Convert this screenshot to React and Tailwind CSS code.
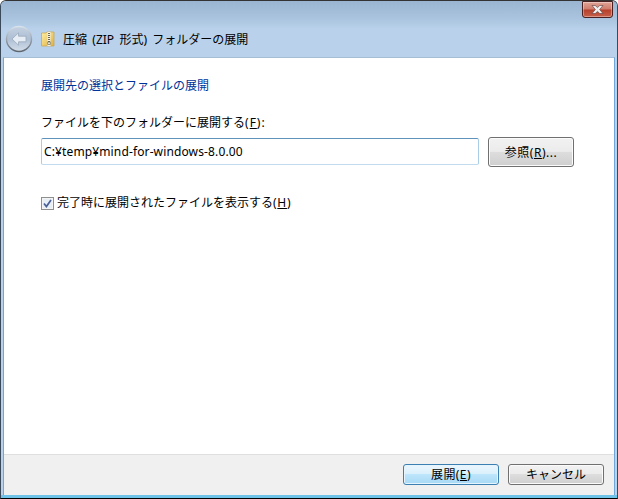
const FONT = "font-['Noto_Sans','Noto_Sans_CJK_JP',sans-serif]";

function BackIcon() {
  return (
    <svg width="28" height="28" viewBox="0 0 28 28" className="block">
      <defs>
        <linearGradient id="ring" x1="0" y1="0" x2="0" y2="1">
          <stop offset="0" stopColor="#d9e2ec" />
          <stop offset="1" stopColor="#5e6670" />
        </linearGradient>
        <linearGradient id="face" x1="0" y1="0" x2="0" y2="1">
          <stop offset="0" stopColor="#c4d2e2" />
          <stop offset="0.5" stopColor="#aebfd4" />
          <stop offset="1" stopColor="#d3deea" />
        </linearGradient>
      </defs>
      <circle cx="14" cy="14" r="12.5" fill="url(#face)" stroke="url(#ring)" strokeWidth="1.4" />
      <path d="M7 14 L13.5 7.8 V11.2 H21 V16.8 H13.5 V20.2 Z" fill="#e6edf5" stroke="#9aa9bb" strokeWidth="0.8" strokeLinejoin="round" />
    </svg>
  );
}

function ZipIcon() {
  return (
    <svg width="14" height="16" viewBox="0 0 14 16" className="block">
      <defs>
        <linearGradient id="fold" x1="0" y1="0" x2="1" y2="1">
          <stop offset="0" stopColor="#fdeea6" />
          <stop offset="1" stopColor="#e0b040" />
        </linearGradient>
      </defs>
      <path d="M0.5 2 H5 L6 1 H13 V15 H0.5 Z" fill="url(#fold)" stroke="#c9a14a" strokeWidth="0.7" />
      <rect x="6.5" y="1" width="3" height="14" fill="#f6f3e6" />
      <path d="M7 2.5h2M7 4.5h2M7 6.5h2M7 8.5h2M7 10.5h2" stroke="#6a6a5a" strokeWidth="1" />
      <rect x="6.8" y="11" width="2.4" height="2.6" fill="none" stroke="#6a6a5a" strokeWidth="0.7" />
    </svg>
  );
}

function CloseGlyph() {
  return (
    <svg width="13" height="9" viewBox="0 0 13 9" className="block">
      <path d="M1 0.5 H4.2 L6.5 2.6 L8.8 0.5 H12 L8.6 4.5 L12 8.5 H8.8 L6.5 6.4 L4.2 8.5 H1 L4.4 4.5 Z" fill="#f2f2f2" stroke="#5a3a3a" strokeWidth="0.6" />
    </svg>
  );
}

function Btn({ children, className = "" }) {
  return (
    <button className={"flex items-center justify-center rounded-[3px] border border-[#707070] bg-[linear-gradient(#f2f2f2_0%,#ebebeb_48%,#dddddd_50%,#cfcfcf_100%)] pt-[1px] text-[12px] text-black shadow-[inset_0_0_0_1px_#fbfbfb] " + className}>
      {children}
    </button>
  );
}

export default function App() {
  return (
    <div className={FONT + " flex h-[499px] w-[618px] flex-col overflow-hidden rounded-t-[6px] border-x border-b border-t border-x-[#3b4a5a] border-t-[#333] border-b-black bg-[#b9d1ea] text-[12px] leading-[16px] text-black"}>
      <div className="flex h-[56px] shrink-0 flex-col bg-[linear-gradient(#9ab5d1_0%,#a9c3de_30%,#b9d1ea_50%,#b9d1ea_100%)] pl-[4px] pr-[4px]">
        <div className="flex h-[25px] justify-end">
          <div className="flex h-[17px] w-[31px] items-center justify-center rounded-b-[3px] border border-[#4a2020] bg-[linear-gradient(#dfa396_0%,#cf7b6c_48%,#b5402b_52%,#c8604a_100%)] shadow-[inset_0_0_0_1px_rgba(255,255,255,0.35)]">
            <CloseGlyph />
          </div>
        </div>
        <div className="flex h-[26px] items-center">
          <BackIcon />
          <div className="ml-[8px]"><ZipIcon /></div>
          <span className="ml-[8px] mt-[1px] text-[12px] text-black [word-spacing:2.2px]">圧縮 (ZIP 形式) フォルダーの展開</span>
        </div>
      </div>

      <div className="mx-[2px] flex min-h-0 flex-1 flex-col border-x border-x-[#6fa8d8] border-t border-t-[#a6bdd6] bg-white">
        <div className="flex flex-1 flex-col pl-[37px] pr-[40px] pt-[20px]">
          <div className="text-[12px] text-[#003399]">展開先の選択とファイルの展開</div>
          <div className="mt-[21px]">ファイルを下のフォルダーに展開する<span className="tracking-[1px]">(<span className="underline">F</span>):</span></div>
          <div className="mt-[6px] flex items-start gap-[9px]">
            <div className="mt-[1px] flex h-[27px] w-[438px] items-center rounded-[2px] border border-[#7fa9cb] border-b-[#c3dbee] border-x-[#a9cde6] border-t-[#5f93bc] pl-[2px] pt-[1px] text-[12px] tracking-[0.13px]">
              C:¥temp¥mind-for-windows-8.0.00
            </div>
            <Btn className="h-[30px] w-[86px]"><span className="tracking-[0.5px]">参照(<span className="underline">R</span>)...</span></Btn>
          </div>
          <div className="mt-[28px] flex items-center gap-[3px]">
            <div className="mt-[1px] flex h-[13px] w-[13px] items-center justify-center border border-[#8e8f8f] bg-[#e6eef6] shadow-[inset_0_0_0_1px_#f4f4f4]">
              <svg width="9" height="9" viewBox="0 0 9 9" className="block"><path d="M1 4.5 L3.4 7.5 L8 1" fill="none" stroke="#4a5f97" strokeWidth="1.7" /></svg>
            </div>
            <span>完了時に展開されたファイルを表示する<span className="tracking-[0.7px]">(<span className="underline">H</span>)</span></span>
          </div>
        </div>
        <div className="flex h-[41px] shrink-0 items-start justify-end gap-[9px] border-t border-t-[#dfdfdf] bg-[#f0f0f0] pr-[10px] pt-[9px]">
          <button className="flex h-[21px] w-[96px] items-center justify-center rounded-[3px] border border-[#3c7fb1] bg-[linear-gradient(#ebf6fd_0%,#daf0fc_48%,#bde5fb_50%,#a7d9f5_100%)] pt-[1px] text-[12px] shadow-[inset_0_0_0_1px_#e6f5fd]">
            <span className="tracking-[0.4px]">展開(<span className="underline">E</span>)</span>
          </button>
          <Btn className="h-[21px] w-[96px]">キャンセル</Btn>
        </div>
      </div>
      <div className="h-[3px] shrink-0 bg-[#6fc3e8]" />
    </div>
  );
}
